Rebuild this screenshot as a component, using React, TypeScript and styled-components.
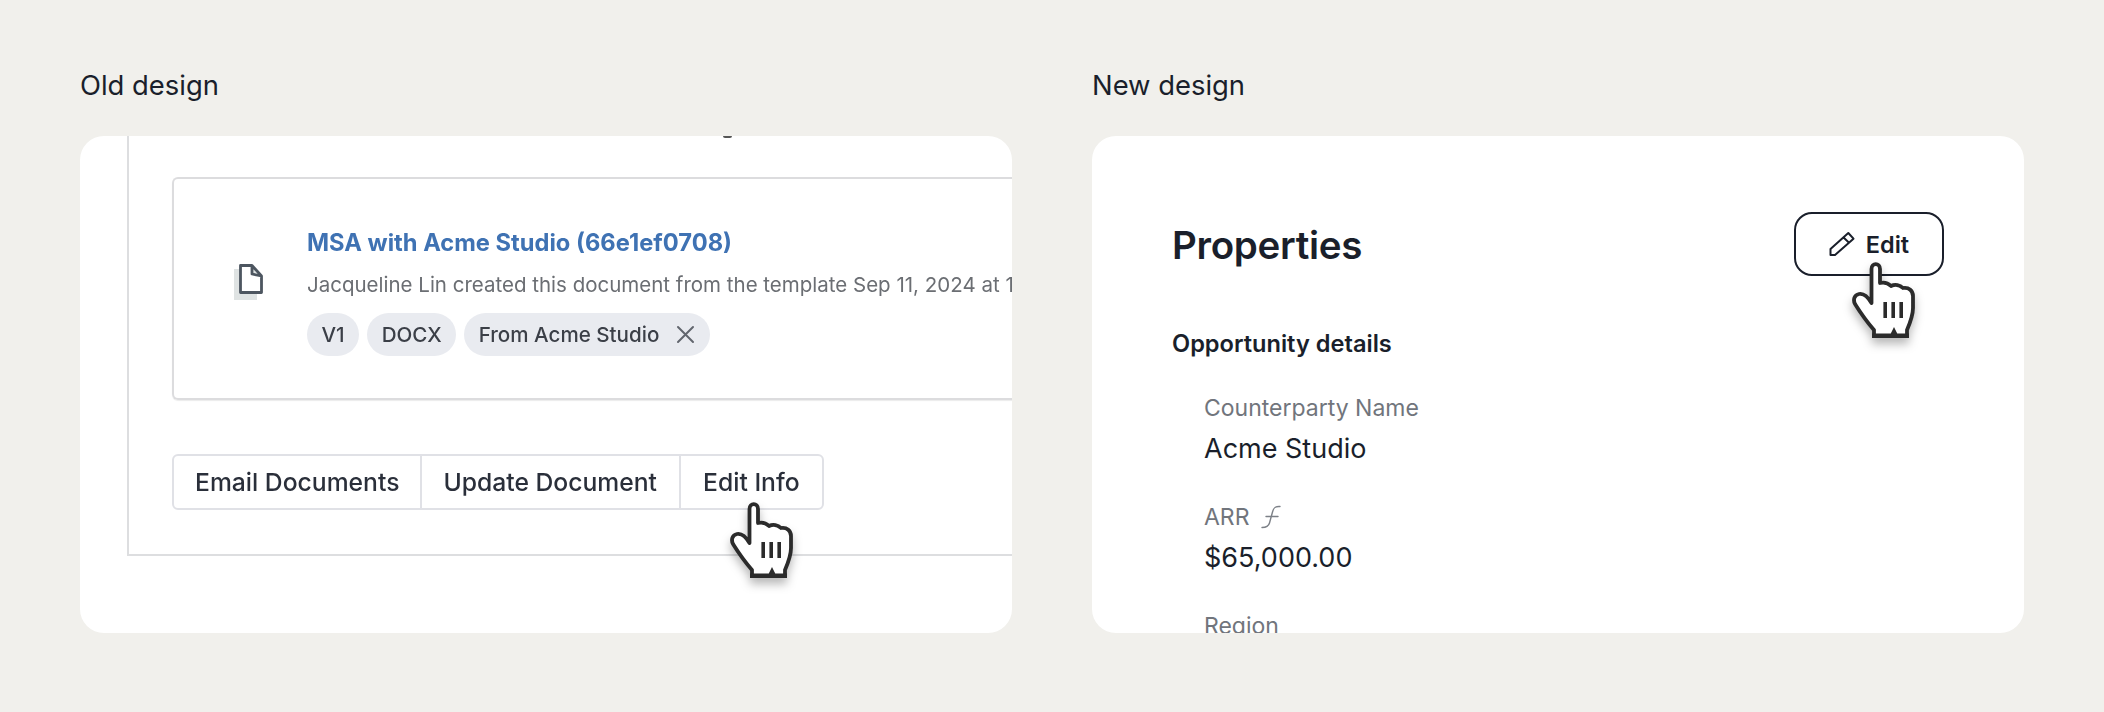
import React from 'react';
import styled, { createGlobalStyle } from 'styled-components';

const GlobalStyle = createGlobalStyle`
  html, body {
    margin: 0;
    background: #f1f0ec;
  }
  * {
    box-sizing: border-box;
  }
`;

const Page = styled.div`
  width: 2104px;
  height: 712px;
  padding: 69px 80px 0;
  display: grid;
  grid-template-columns: 932px 932px;
  column-gap: 80px;
  font-family: Inter, 'Liberation Sans', sans-serif;
  overflow: hidden;
`;

const Column = styled.section`
  display: flex;
  flex-direction: column;
`;

const Caption = styled.h2`
  margin: 0 0 35px;
  height: 32px;
  font-size: 27.4px;
  line-height: 32px;
  font-weight: 400;
  color: #1a1f2b;
`;

const Card = styled.div`
  position: relative;
  height: 497px;
  background: #fff;
  border-radius: 24px;
  overflow: hidden;
`;

const NewBody = styled.div`
  padding: 77px 80px 0;
`;

const Shot = styled.div`
  filter: blur(0.5px);
  height: 100%;
`;

const Panel = styled.div`
  position: relative;
  margin-left: 47px;
  height: 420px;
  padding: 41px 0 0 43px;
  border-left: 2px solid #dddee0;
  border-bottom: 2px solid #dddee0;
`;

const ClippedGlyph = styled.span`
  position: absolute;
  top: 0;
  left: 594px;
  width: 9px;
  height: 2px;
  background: #555;
  border-radius: 0 0 3px 3px;
`;

const DocCard = styled.div`
  width: 900px;
  height: 223px;
  display: flex;
  align-items: center;
  border: 2px solid #dcdcde;
  border-right: none;
  border-radius: 6px;
  box-shadow: 0 1px 1px rgba(0, 0, 0, 0.08);
`;

const DocIconSlot = styled.div`
  position: relative;
  width: 133px;
  padding-left: 65px;
  margin-top: -20px;
  flex: none;
`;

const DocShadow = styled.div`
  position: absolute;
  left: 60px;
  top: 5px;
  width: 23px;
  height: 31px;
  background: #dfe3e3;
`;

const DocGlyph = styled.svg`
  position: relative;
  display: block;
  width: 24px;
  height: 30px;
`;

const DocText = styled.div`
  display: flex;
  flex-direction: column;
  padding-top: 7px;
  white-space: nowrap;
`;

const DocTitle = styled.a`
  font-size: 23.7px;
  line-height: 28px;
  font-weight: 700;
  color: #3f72b3;
`;

const DocMeta = styled.p`
  margin: 14px 0 14px;
  font-size: 20.5px;
  line-height: 28px;
  color: #6b6e73;
`;

const Chips = styled.div`
  display: flex;
  gap: 8px;
`;

const Chip = styled.span`
  display: inline-flex;
  align-items: center;
  gap: 17px;
  height: 43px;
  padding: 0 14.5px;
  border-radius: 22px;
  background: #e9ebf0;
  font-size: 20.6px;
  font-weight: 500;
  color: #3b3f47;
`;

const ButtonGroup = styled.div`
  display: inline-flex;
  margin-top: 54px;
  height: 56px;
  border: 2px solid #e0e1e6;
  border-radius: 6px;
`;

const Segment = styled.div`
  display: flex;
  align-items: center;
  padding: 0 21px;
  font-size: 24.7px;
  font-weight: 500;
  color: #2a2f3a;
  white-space: nowrap;

  & + & {
    border-left: 2px solid #e0e1e6;
  }

  &:nth-child(2) {
    padding-right: 22px;
  }

  &:last-child {
    padding: 0 22px;
  }
`;

const HeaderRow = styled.div`
  display: flex;
  align-items: flex-start;
  justify-content: space-between;
`;

const Title = styled.h1`
  margin: 0;
  font-size: 38.5px;
  line-height: 64px;
  font-weight: 600;
  letter-spacing: -0.3px;
  color: #1a1f2b;
`;

const EditButton = styled.div`
  position: relative;
  margin: -1px 0 -1px;
  display: flex;
  align-items: center;
  justify-content: center;
  gap: 11px;
  width: 150px;
  height: 64px;
  border: 2px solid #1a1f2b;
  border-radius: 18px;
  font-size: 23.5px;
  font-weight: 600;
  color: #1a1f2b;
`;

const Section = styled.h3`
  margin: 53px 0 0;
  font-size: 23.6px;
  line-height: 28px;
  font-weight: 600;
  color: #1a1f2b;
`;

const Fields = styled.div`
  margin-top: 36px;
  padding-left: 32px;
  display: flex;
  flex-direction: column;
  gap: 40px;
`;

const Field = styled.div`
  display: flex;
  flex-direction: column;
  gap: 13px;
`;

const FieldLabel = styled.div`
  display: flex;
  align-items: center;
  gap: 12px;
  height: 28px;
  font-size: 23px;
  line-height: 28px;
  color: #71757c;
`;

const FieldValue = styled.div`
  font-size: 27px;
  line-height: 28px;
  color: #1a1f2b;
`;

const Hand = styled.svg<{ $left: number; $top: number }>`
  position: absolute;
  left: ${p => p.$left}px;
  top: ${p => p.$top}px;
  width: 68px;
  height: 85px;
  overflow: visible;
  filter: drop-shadow(0 6px 5px rgba(0, 0, 0, 0.28));
`;

const Cursor = ({ left, top }: { left: number; top: number }) => (
  <Hand $left={left} $top={top} viewBox="18 8 68 85">
    <path
      d="M39.5 47V19C39.5 12.5 48 12.5 48 19V33C52 32 56 33 59 36C63 34 68 35 71 38C77 37 81 41 81 46V58C81 66 78 73 75 80V86H42V80C35 72 28 62 23 54C21 50 22 45 27 44C32 43 36 47 39.5 53Z"
      fill="#fff"
      stroke="#2b2b2b"
      strokeWidth="3.8"
      strokeLinejoin="round"
    />
    <path d="M40 83.5H77V88H40Z M58.5 84L62 77L65.5 84Z" fill="#2b2b2b" />
    <path d="M53.2 52V68M61.2 52V68M69.2 52V68" stroke="#2b2b2b" strokeWidth="3.6" fill="none" />
  </Hand>
);

const DocIcon = () => (
  <DocGlyph viewBox="0 0 24 30">
    <path
      d="M1.5 1.5H13L22.5 12V28.5H1.5Z M13 1.5V10L22.5 12"
      fill="#fff"
      stroke="#4d5660"
      strokeWidth="2.8"
      strokeLinejoin="round"
    />
  </DocGlyph>
);

const CloseIcon = () => (
  <svg width="19" height="19" viewBox="0 0 19 19">
    <path d="M2 2L17 17M17 2L2 17" stroke="#62666e" strokeWidth="2" strokeLinecap="round" />
  </svg>
);

const PencilIcon = () => (
  <svg width="26" height="26" viewBox="0 0 26 26">
    <path
      d="M19.3 2L24.5 7.7L6 24H1.5V18Z M14.3 6.3L20.3 12"
      fill="none"
      stroke="#1a1f2b"
      strokeWidth="2"
      strokeLinejoin="round"
    />
  </svg>
);

const FormulaIcon = () => (
  <svg width="20" height="24" viewBox="0 0 20 24">
    <path
      d="M19 1.5C14 1 12.5 3 11.5 7L8.5 18C7.5 21.5 5.5 22.5 1 22.5M5 11.5H17"
      fill="none"
      stroke="#7c8087"
      strokeWidth="1.4"
      strokeLinecap="round"
    />
  </svg>
);

export default function App() {
  return (
    <Page>
      <GlobalStyle />

      <Column>
        <Caption>Old design</Caption>
        <Card>
          <Shot>
            <Panel>
              <ClippedGlyph />
              <DocCard>
                <DocIconSlot>
                  <DocShadow />
                  <DocIcon />
                </DocIconSlot>
                <DocText>
                  <DocTitle>MSA with Acme Studio (66e1ef0708)</DocTitle>
                  <DocMeta>Jacqueline Lin created this document from the template Sep 11, 2024 at 1:32 PM</DocMeta>
                  <Chips>
                    <Chip>V1</Chip>
                    <Chip>DOCX</Chip>
                    <Chip>
                      From Acme Studio
                      <CloseIcon />
                    </Chip>
                  </Chips>
                </DocText>
              </DocCard>
              <ButtonGroup>
                <Segment>Email Documents</Segment>
                <Segment>Update Document</Segment>
                <Segment>Edit Info</Segment>
              </ButtonGroup>
            </Panel>
          </Shot>
          <Cursor left={648} top={362} />
        </Card>
      </Column>

      <Column>
        <Caption>New design</Caption>
        <Card>
          <NewBody>
            <HeaderRow>
              <Title>Properties</Title>
              <EditButton>
                <PencilIcon />
                Edit
                <Cursor left={54} top={44} />
              </EditButton>
            </HeaderRow>
            <Section>Opportunity details</Section>
            <Fields>
              <Field>
                <FieldLabel>Counterparty Name</FieldLabel>
                <FieldValue>Acme Studio</FieldValue>
              </Field>
              <Field>
                <FieldLabel>
                  ARR
                  <FormulaIcon />
                </FieldLabel>
                <FieldValue>$65,000.00</FieldValue>
              </Field>
              <Field>
                <FieldLabel>Region</FieldLabel>
              </Field>
            </Fields>
          </NewBody>
        </Card>
      </Column>
    </Page>
  );
}
